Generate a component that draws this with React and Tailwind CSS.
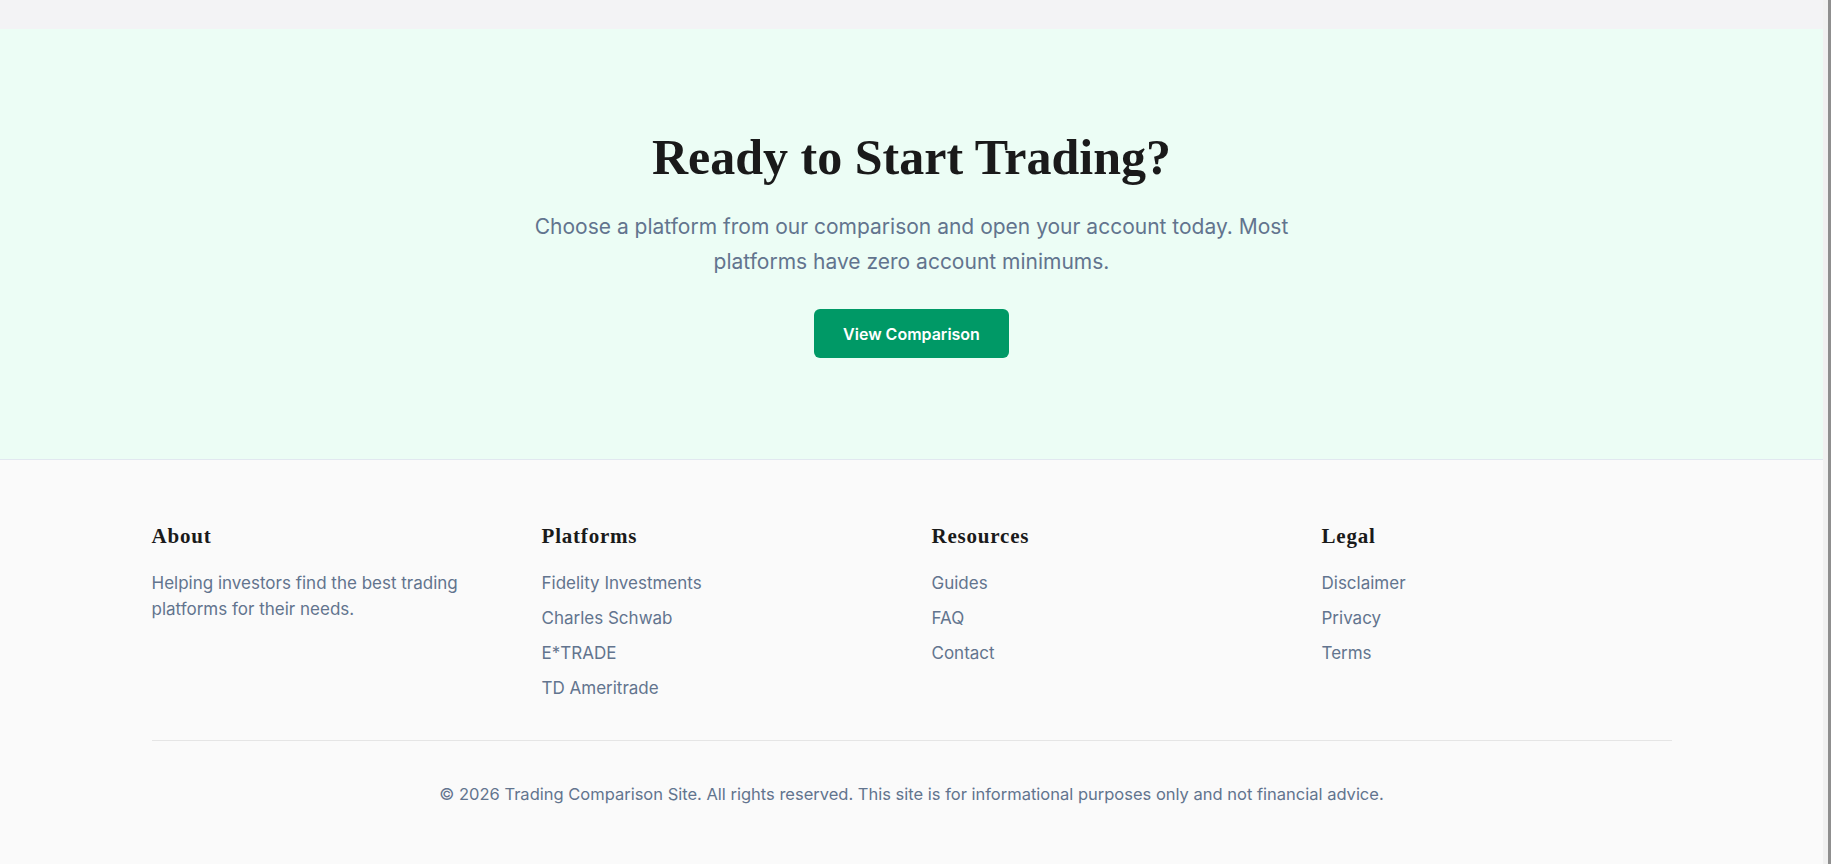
import React from 'react';

const footerColumns = [
    { title: 'Platforms', links: ['Fidelity Investments', 'Charles Schwab', 'E*TRADE', 'TD Ameritrade'] },
    { title: 'Resources', links: ['Guides', 'FAQ', 'Contact'] },
    { title: 'Legal', links: ['Disclaimer', 'Privacy', 'Terms'] },
];

const FooterHeading = ({ children }) => (
    <h4 className="mb-5 font-['Liberation_Serif',serif] text-[21px] font-bold leading-7 tracking-[0.8px] text-[#1a1a1a]">
        {children}
    </h4>
);

const App = () => {
    return (
        <div className="flex min-h-screen bg-[#fafafa] font-['Inter','Noto_Sans',sans-serif]">
            <div className="min-w-0 flex-1">
                {/* strip left over from the section above */}
                <div className="h-[29px] bg-[#f3f3f5]" />

                <section className="border-b border-[#e2e8f0] bg-[#ecfdf5] pt-[103px] pb-[101px] text-center">
                    <h2 className="font-['Liberation_Serif',serif] text-[50px] font-bold leading-none text-[#1a1a1a]">
                        Ready to Start Trading?
                    </h2>
                    <p className="mx-auto mt-[27px] max-w-[780px] text-[21px] leading-[35px] text-slate-500">
                        Choose a platform from our comparison and open your account today. Most platforms have zero account minimums.
                    </p>
                    <button className="mx-auto mt-[30px] flex h-[49px] items-center rounded-md bg-[#009966] px-[29px] text-base font-semibold text-white">
                        View Comparison
                    </button>
                </section>

                <footer className="bg-[#fafafa] pt-[62px] pb-16">
                    <div className="mx-auto w-full max-w-[1520px]">
                        <div className="grid grid-cols-4 gap-10">
                            <div>
                                <FooterHeading>About</FooterHeading>
                                <p className="text-[17px] leading-[26px] text-slate-500">
                                    Helping investors find the best trading platforms for their needs.
                                </p>
                            </div>
                            {footerColumns.map((col) => (
                                <div key={col.title}>
                                    <FooterHeading>{col.title}</FooterHeading>
                                    <ul className="flex flex-col gap-[9px]">
                                        {col.links.map((link) => (
                                            <li key={link} className="leading-[26px]">
                                                <a href="#" className="text-[17px] leading-[26px] text-slate-500">{link}</a>
                                            </li>
                                        ))}
                                    </ul>
                                </div>
                            ))}
                        </div>

                        <div className="mt-[39px] border-t border-[#e5e5e5] pt-10 text-center">
                            <p className="text-[16.5px] leading-[26px] text-slate-500">
                                © 2026 Trading Comparison Site. All rights reserved. This site is for informational purposes only and not financial advice.
                            </p>
                        </div>
                    </div>
                </footer>
            </div>

            {/* window scrollbar edge */}
            <div className="flex w-2 shrink-0">
                <div className="w-[5px] bg-[#f1f1f1]" />
                <div className="w-[3px] bg-[#8f8f8f]" />
            </div>
        </div>
    );
};

export default App;
